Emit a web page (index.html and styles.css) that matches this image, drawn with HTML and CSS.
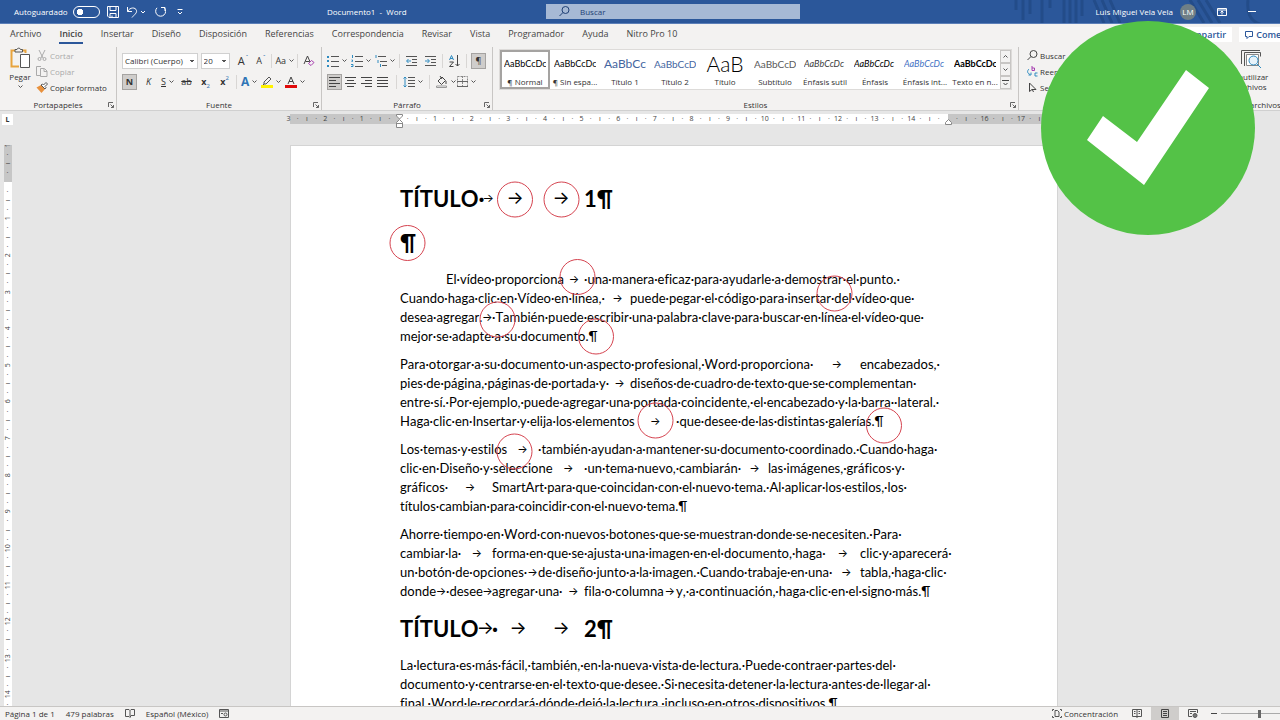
FILE: index.html
```html
<!DOCTYPE html>
<html lang="es">
<head>
    <meta charset="UTF-8">
    <meta name="viewport" content="width=device-width, initial-scale=1.0">
    <title>Documento1 - Word</title>
    <link rel="stylesheet" href="styles.css">
</head>
<body>
    <div class="app">
        <header class="titlebar">
            <svg class="waves" width="270" height="23" viewBox="0 0 270 23" fill="none" stroke="#234c89" stroke-width="3">
                <path d="M6 0v10M13 0v20M20 0v14M32 0v23M40 0v8M54 0v23M60 0v23M66 0v23M72 0v16M84 0l10 23M92 0l10 23M100 0l10 23M180 0l14 23M188 0l14 23M196 0l14 23M238 0q-2 20 12 24"/>
            </svg>
            <div class="quick">
                <label class="autosave">Autoguardado <input type="checkbox" class="toggle"></label>
                <button class="icon-btn" aria-label="Guardar">
                    <svg width="12" height="12" viewBox="0 0 12 12" fill="none" stroke="#fff"><path d="M.5.5h11v11H2L.5 10zM3 .5v4h6v-4M3 11.500V7.500h6v4M5 9.500v2"/></svg>
                </button>
                <button class="icon-btn" aria-label="Deshacer">
                    <svg width="20" height="12" viewBox="0 0 20 12" fill="none" stroke="#fff"><path d="M1.500 1v4.500H6M1.500 5.500C4 1 9.500 1 10.500 4.500c.6 2.500-2 4-4.500 7M15 5l2 2 2-2"/></svg>
                </button>
                <button class="icon-btn" aria-label="Rehacer">
                    <svg width="13" height="12" viewBox="0 0 13 12" fill="none" stroke="#fff"><path d="M8 1.500h4V5M11.500 2A5 5 0 1 1 4 1.800"/></svg>
                </button>
                <button class="icon-btn customize" aria-label="Personalizar">
                    <svg width="6" height="6" viewBox="0 0 6 6" fill="none" stroke="#fff"><path d="M.5.500h5M1 3l2 2 2-2"/></svg>
                </button>
            </div>
            <span class="doc-name">Documento1 &nbsp;- &nbsp;Word</span>
            <label class="search">
                <svg width="11" height="11" viewBox="0 0 11 11" fill="none" stroke="#1f3f74"><circle cx="6.500" cy="4" r="3.500"/><path d="M4 6.500.5 10"/></svg>
                <input type="text" placeholder="Buscar" aria-label="Buscar">
            </label>
            <div class="account">
                <span>Luis Miguel Vela Vela</span>
                <span class="avatar">LM</span>
                <button class="icon-btn" aria-label="Opciones de la cinta">
                    <svg width="10" height="8" viewBox="0 0 10 8" fill="none" stroke="#fff"><path d="M.5.500h9v7h-9zM.5 2h9M5 6.500V3M3.500 4.500 5 3l1.500 1.500"/></svg>
                </button>
                <button class="icon-btn" aria-label="Minimizar">
                    <svg width="8" height="8" viewBox="0 0 8 8" stroke="#fff"><path d="M0 3.500h8"/></svg>
                </button>
            </div>
        </header>

        <nav class="tabs">
            <a href="#">Archivo</a>
            <a href="#" class="active">Inicio</a>
            <a href="#">Insertar</a>
            <a href="#">Diseño</a>
            <a href="#">Disposición</a>
            <a href="#">Referencias</a>
            <a href="#">Correspondencia</a>
            <a href="#">Revisar</a>
            <a href="#">Vista</a>
            <a href="#">Programador</a>
            <a href="#">Ayuda</a>
            <a href="#">Nitro Pro 10</a>
            <div class="share">
                <button>Compartir</button>
                <button><svg width="8" height="8" viewBox="0 0 8 8" fill="none" stroke="#2b579a"><path d="M.5.500h7v5H4l-2 2v-2H.5z"/></svg> Comentarios</button>
            </div>
        </nav>

        <div class="ribbon">
            <section class="group clipboard">
                <div class="group-body">
                    <button class="big-btn">
                        <svg width="22" height="22" viewBox="0 0 22 22" fill="none"><path d="M10 19.500H2.500v-16h14V6" stroke="#e8a33d" stroke-width="2"/><path d="M6 5V2.500h2a1.800 1.800 0 0 1 3.500 0h2V5z" fill="#f3f2f1" stroke="#555"/><path d="M11.500 7.500h9v13h-9z" fill="#fff" stroke="#555"/></svg>
                        <span>Pegar</span>
                        <svg class="chev" viewBox="0 0 5 3"><path d="m.5.500 2 2 2-2"/></svg>
                    </button>
                    <div class="stack">
                        <button class="row-btn off"><svg width="12" height="11" viewBox="0 0 12 11" fill="none" stroke="#aaa"><path d="m3 0 4 8M9 0 5 8"/><circle cx="3.500" cy="9" r="1.500"/><circle cx="8.500" cy="9" r="1.500"/></svg>Cortar</button>
                        <button class="row-btn off"><svg width="12" height="11" viewBox="0 0 12 11" fill="none" stroke="#aaa"><path d="M4 9.500H.5v-9H5M4.500 2.500h4l2.500 2.500v5.500H4.500zM8 3v2.500h3"/></svg>Copiar</button>
                        <button class="row-btn"><svg width="12" height="11" viewBox="0 0 12 11"><path d="M.5 5.500 5 3l4 4-3.500 4z" fill="#e8913d"/><path d="m5 3 1.500-1 1 1L10 .500l1.500 1.500L9 4.500l1 1L9 7z" fill="#fff" stroke="#555"/></svg>Copiar formato</button>
                    </div>
                </div>
                <footer>Portapapeles</footer>
                <svg class="launcher" viewBox="0 0 6 6"><path d="M.5 5V.500H5M2.500 2.500l3 3M5.500 3v2.500H3"/></svg>
            </section>

            <section class="group font">
                <div class="group-body lines">
                    <div class="line">
                        <select class="font-name" aria-label="Fuente"><option>Calibri (Cuerpo)</option></select>
                        <select class="font-size" aria-label="Tamaño"><option>20</option></select>
                        <button class="tool letter">A<sup>ˆ</sup></button>
                        <button class="tool letter small">A<sup>ˇ</sup></button>
                        <i class="sep"></i>
                        <button class="tool">Aa<svg class="chev" viewBox="0 0 5 3"><path d="m.5.500 2 2 2-2"/></svg></button>
                        <i class="sep"></i>
                        <button class="tool" aria-label="Borrar formato"><svg width="12" height="12" viewBox="0 0 12 12" fill="none"><path d="m1 9 3.500-8L8 9M2.500 6.500h4" stroke="#444"/><path d="m5.500 8.500 3-3 2.500 2-3 3z" fill="#f3f2f1" stroke="#a63fb0"/></svg></button>
                    </div>
                    <div class="line format">
                        <button class="tool on"><b>N</b></button>
                        <button class="tool"><em>K</em></button>
                        <button class="tool"><u>S</u><svg class="chev" viewBox="0 0 5 3"><path d="m.5.500 2 2 2-2"/></svg></button>
                        <button class="tool"><s>ab</s></button>
                        <button class="tool script"><b>x</b><sub>2</sub></button>
                        <button class="tool script"><b>x</b><sup>2</sup></button>
                        <i class="sep"></i>
                        <button class="tool effect"><b>A</b><svg class="chev" viewBox="0 0 5 3"><path d="m.5.500 2 2 2-2"/></svg></button>
                        <button class="tool" aria-label="Resaltar"><svg width="12" height="12" viewBox="0 0 12 12" fill="none"><path d="M3 8V6l5-5 2 2-5 5zM3 8l-1 1" stroke="#555"/><path d="M0 10.500h12" stroke="#fff200" stroke-width="3"/></svg><svg class="chev" viewBox="0 0 5 3"><path d="m.5.500 2 2 2-2"/></svg></button>
                        <button class="tool" aria-label="Color de fuente"><svg width="12" height="12" viewBox="0 0 12 12" fill="none"><path d="m3 8 3-7 3 7M4 5.500h4" stroke="#444"/><path d="M0 10.500h12" stroke="#e00b0b" stroke-width="3"/></svg><svg class="chev" viewBox="0 0 5 3"><path d="m.5.500 2 2 2-2"/></svg></button>
                    </div>
                </div>
                <footer>Fuente</footer>
                <svg class="launcher" viewBox="0 0 6 6"><path d="M.5 5V.500H5M2.500 2.500l3 3M5.500 3v2.500H3"/></svg>
            </section>

            <section class="group paragraph">
                <div class="group-body lines">
                    <div class="line lists">
                        <button class="tool" aria-label="Viñetas"><svg width="12" height="12" viewBox="0 0 12 12"><path d="M4 1.500h8M4 6.500h8M4 11.500h8" stroke="#555"/><path d="M0 1h2v2H0zM0 5h2v2H0zM0 10h2v2H0z" fill="#2e8bc0"/></svg><svg class="chev" viewBox="0 0 5 3"><path d="m.5.500 2 2 2-2"/></svg></button>
                        <button class="tool" aria-label="Numeración"><svg width="12" height="12" viewBox="0 0 12 12" fill="none"><path d="M4 1.500h8M4 6.500h8M4 11.500h8" stroke="#555"/><path d="M1.500 0v3M.5 5h1v1.500h-1M0 9.500h2v2H0" stroke="#2e8bc0"/></svg><svg class="chev" viewBox="0 0 5 3"><path d="m.5.500 2 2 2-2"/></svg></button>
                        <button class="tool" aria-label="Lista multinivel"><svg width="12" height="12" viewBox="0 0 12 12" fill="none"><path d="M3 1.500h8M5 6.500h7M7 10.500h5" stroke="#555"/><path d="M1 0v3M3 5v3M5.500 9v3" stroke="#2e8bc0"/></svg><svg class="chev" viewBox="0 0 5 3"><path d="m.5.500 2 2 2-2"/></svg></button>
                        <i class="sep"></i>
                        <button class="tool" aria-label="Disminuir sangría"><svg width="11" height="12" viewBox="0 0 11 12" fill="none"><path d="M0 1.500h11M6 4.500h5M6 7.500h5M0 10.500h11" stroke="#555"/><path d="M5 6H1M2.500 4 .5 6l2 2" stroke="#2e8bc0"/></svg></button>
                        <button class="tool" aria-label="Aumentar sangría"><svg width="11" height="12" viewBox="0 0 11 12" fill="none"><path d="M0 1.500h11M6 4.500h5M6 7.500h5M0 10.500h11" stroke="#555"/><path d="M0 6h4M2.500 4l2 2-2 2" stroke="#2e8bc0"/></svg></button>
                        <i class="sep"></i>
                        <button class="tool" aria-label="Ordenar"><svg width="11" height="12" viewBox="0 0 11 12" fill="none"><path d="m.5 5 2-4.500 2 4.500M1 3.500h3" stroke="#2e8bc0"/><path d="M.5 7h4l-4 4.500h4M8.500 0v11M6.500 9l2 2 2-2" stroke="#444"/></svg></button>
                        <i class="sep"></i>
                        <button class="tool on">¶</button>
                    </div>
                    <div class="line align">
                        <button class="tool on" aria-label="Alinear a la izquierda"><svg width="11" height="10" viewBox="0 0 11 10" stroke="#444"><path d="M0 .500h11M0 3.500h7M0 6.500h11M0 9.500h7"/></svg></button>
                        <button class="tool" aria-label="Centrar"><svg width="11" height="10" viewBox="0 0 11 10" stroke="#444"><path d="M0 .500h11M2 3.500h7M0 6.500h11M2 9.500h7"/></svg></button>
                        <button class="tool" aria-label="Alinear a la derecha"><svg width="11" height="10" viewBox="0 0 11 10" stroke="#444"><path d="M0 .500h11M4 3.500h7M0 6.500h11M4 9.500h7"/></svg></button>
                        <button class="tool" aria-label="Justificar"><svg width="11" height="10" viewBox="0 0 11 10" stroke="#444"><path d="M0 .500h11M0 3.500h11M0 6.500h11M0 9.500h11"/></svg></button>
                        <i class="sep"></i>
                        <button class="tool" aria-label="Interlineado"><svg width="12" height="12" viewBox="0 0 12 12" fill="none"><path d="M5 1.500h7M5 4.500h7M5 7.500h7M5 10.500h7" stroke="#555"/><path d="M2 1v10M.5 2.500 2 1l1.500 1.500M.5 9.500 2 11l1.500-1.500" stroke="#2e8bc0"/></svg><svg class="chev" viewBox="0 0 5 3"><path d="m.5.500 2 2 2-2"/></svg></button>
                        <i class="sep"></i>
                        <button class="tool" aria-label="Sombreado"><svg width="12" height="12" viewBox="0 0 12 12" fill="none"><path d="m2 5 4-4 3.500 3.500-4 4zM4 0l2 3M10 5v3" stroke="#444"/><path d="M.5 10h10v1.500H.500z" fill="#fff" stroke="#999"/></svg><svg class="chev" viewBox="0 0 5 3"><path d="m.5.500 2 2 2-2"/></svg></button>
                        <button class="tool" aria-label="Bordes"><svg width="11" height="11" viewBox="0 0 11 11" fill="none"><path d="M.5.500h10v10H.500zM5.500 0v11" stroke="#888" stroke-dasharray="2 1"/><path d="M0 5.500h11M0 10.500h11" stroke="#666"/></svg><svg class="chev" viewBox="0 0 5 3"><path d="m.5.500 2 2 2-2"/></svg></button>
                    </div>
                </div>
                <footer>Párrafo</footer>
                <svg class="launcher" viewBox="0 0 6 6"><path d="M.5 5V.500H5M2.500 2.500l3 3M5.500 3v2.500H3"/></svg>
            </section>

            <section class="group styles">
                <div class="gallery">
                    <button class="style selected"><span>AaBbCcDc</span>¶ Normal</button>
                    <button class="style"><span>AaBbCcDc</span>¶ Sin espa...</button>
                    <button class="style heading1"><span>AaBbCc</span>Título 1</button>
                    <button class="style heading2"><span>AaBbCcD</span>Título 2</button>
                    <button class="style title"><span>AaB</span>Título</button>
                    <button class="style subtitle"><span>AaBbCcD</span>Subtítulo</button>
                    <button class="style subtle"><span>AaBbCcDc</span>Énfasis sutil</button>
                    <button class="style emphasis"><span>AaBbCcDc</span>Énfasis</button>
                    <button class="style intense"><span>AaBbCcDc</span>Énfasis int...</button>
                    <button class="style strong"><span>AaBbCcDc</span>Texto en n...</button>
                    <div class="scroller">
                        <button aria-label="Arriba" disabled><svg class="chev" viewBox="0 0 5 3"><path d="m.5 2.500 2-2 2 2"/></svg></button>
                        <button aria-label="Abajo"><svg class="chev" viewBox="0 0 5 3"><path d="m.5.500 2 2 2-2"/></svg></button>
                        <button aria-label="Más"><svg width="7" height="6" viewBox="0 0 7 6" fill="none" stroke="#444"><path d="M0 .500h7M1.500 3l2 2 2-2"/></svg></button>
                    </div>
                </div>
                <footer>Estilos</footer>
                <svg class="launcher" viewBox="0 0 6 6"><path d="M.5 5V.500H5M2.500 2.500l3 3M5.500 3v2.500H3"/></svg>
            </section>

            <section class="group editing">
                <div class="stack">
                    <button class="row-btn"><svg width="11" height="11" viewBox="0 0 11 11" fill="none" stroke="#444"><circle cx="6.500" cy="4" r="3.500"/><path d="M4 6.500.5 10"/></svg>Buscar</button>
                    <button class="row-btn"><svg width="11" height="11" viewBox="0 0 11 11" fill="none"><path d="M5 0v4.500h2.500V2H5" stroke="#a63fb0"/><path d="M2 3C0 5 0 7 3 8.500M1.500 9H4V6.500M10.500 7H8v3h2.500" stroke="#2e8bc0"/></svg>Reemplazar</button>
                    <button class="row-btn"><svg width="11" height="11" viewBox="0 0 11 11" fill="none" stroke="#444"><path d="M2.500 1v8.500L5 7.500h4zM5 7l1.500 3"/></svg>Seleccionar</button>
                </div>
            </section>

            <section class="group reuse">
                <button class="big-btn">
                    <svg width="22" height="20" viewBox="0 0 22 20" fill="none"><path d="M1.500 15V1.500H20M4.500 17V3.500h16v4" stroke="#555"/><path d="M6.500 5.500h12v11h-12z" fill="#fff" stroke="#888"/><circle cx="13.500" cy="11.500" r="4.500" fill="#e8f3fa" stroke="#2e8bc0"/><path d="m17 15 4 4" stroke="#2e8bc0"/></svg>
                    <span>Reutilizar<br>archivos</span>
                </button>
                <footer>Reutilizar archivos</footer>
            </section>
        </div>

        <main class="workspace">
            <div class="tab-picker">L</div>
            <div class="ruler">
                <div class="ticks" id="rulerTop"></div>
                <svg class="indent" width="7" height="14" viewBox="0 0 7 14"><path d="M.5.500h6V2l-3 3-3-3zM3.500 5.500l3 3v5h-6v-5zM.5 9.500h6" fill="#fff" stroke="#888"/></svg>
                <svg class="indent right" width="7" height="6" viewBox="0 0 7 6"><path d="M3.500.500l3 3v2h-6v-2z" fill="#fff" stroke="#888"/></svg>
            </div>
            <div class="side-ruler">
                <div class="ticks" id="rulerSide"></div>
            </div>
            <article class="page">
                <h1>TÍTULO·<span class="tab tight"><i>→</i>	</span><span class="tab"><i>→</i>	</span><span class="tab"><i>→</i>	</span>1¶</h1>
                <h1>¶</h1>
<p><span class="tab">	</span>El·vídeo·proporciona<span class="tab"><i>→</i>	</span>·una·manera·eficaz·para·ayudarle·a·demostrar·el·punto.·
Cuando·haga·clic·en·Vídeo·en·línea,·<span class="tab"><i>→</i>	</span>puede·pegar·el·código·para·insertar·del·vídeo·que·
desea·agregar.<span class="tab"><i>→</i>	</span>·También·puede·escribir·una·palabra·clave·para·buscar·en·línea·el·vídeo·que·
mejor·se·adapte·a·su·documento.¶</p>
<p>Para·otorgar·a·su·documento·un·aspecto·profesional,·Word·proporciona·<span class="tab wide"><i>→</i>	</span>encabezados,·
pies·de·página,·páginas·de·portada·y·<span class="tab"><i>→</i>	</span>diseños·de·cuadro·de·texto·que·se·complementan·
entre·sí.·Por·ejemplo,·puede·agregar·una·portada·coincidente,·el·encabezado·y·la·barra··lateral.·
Haga·clic·en·Insertar·y·elija·los·elementos<span class="tab"><i>→</i>	</span>·que·desee·de·las·distintas·galerías.¶</p>
<p>Los·temas·y·estilos<span class="tab"><i>→</i>	</span>·también·ayudan·a·mantener·su·documento·coordinado.·Cuando·haga·
clic·en·Diseño·y·seleccione<span class="tab"><i>→</i>	</span>·un·tema·nuevo,·cambiarán·<span class="tab"><i>→</i>	</span>las·imágenes,·gráficos·y·
gráficos·<span class="tab"><i>→</i>	</span>SmartArt·para·que·coincidan·con·el·nuevo·tema.·Al·aplicar·los·estilos,·los·
títulos·cambian·para·coincidir·con·el·nuevo·tema.¶</p>
<p>Ahorre·tiempo·en·Word·con·nuevos·botones·que·se·muestran·donde·se·necesiten.·Para·
cambiar·la·<span class="tab"><i>→</i>	</span>forma·en·que·se·ajusta·una·imagen·en·el·documento,·haga·<span class="tab"><i>→</i>	</span>clic·y·aparecerá·
un·botón·de·opciones·<span class="tab"><i>→</i>	</span>de·diseño·junto·a·la·imagen.·Cuando·trabaje·en·una·<span class="tab"><i>→</i>	</span>tabla,·haga·clic·
donde<span class="tab"><i>→</i>	</span>·desee<span class="tab"><i>→</i>	</span>agregar·una·<span class="tab"><i>→</i>	</span>fila·o·columna<span class="tab"><i>→</i>	</span>y,·a·continuación,·haga·clic·en·el·signo·más.¶</p>
                <h1>TÍTULO<span class="tab"><i>→</i>	</span>·<span class="tab"><i>→</i>	</span><span class="tab"><i>→</i>	</span>2¶</h1>
<p>La·lectura·es·más·fácil,·también,·en·la·nueva·vista·de·lectura.·Puede·contraer·partes·del·
documento·y·centrarse·en·el·texto·que·desee.·Si·necesita·detener·la·lectura·antes·de·llegar·al·
final.·Word·le·recordará·dónde·dejó·la·lectura,·incluso·en·otros·dispositivos.¶</p>
                <svg class="marks" width="766" height="560" viewBox="0 0 766 560" fill="none" stroke="#d5434f">
                    <circle cx="224" cy="53.500" r="17.500"/>
                    <circle cx="270.500" cy="53.500" r="17.500"/>
                    <circle cx="116.500" cy="97" r="17.500"/>
                    <circle cx="286.500" cy="131" r="17.500"/>
                    <circle cx="543.500" cy="147.500" r="17.500"/>
                    <circle cx="206.500" cy="173.500" r="17.500"/>
                    <circle cx="305" cy="190.500" r="17.500"/>
                    <circle cx="364.500" cy="274.500" r="17.500"/>
                    <circle cx="593" cy="279.500" r="17.500"/>
                    <circle cx="223.500" cy="305.500" r="17.500"/>
                </svg>
            </article>
        </main>

        <footer class="statusbar">
            <span>Página 1 de 1</span>
            <span>479 palabras</span>
            <svg width="10" height="9" viewBox="0 0 10 9" fill="none" stroke="#555"><path d="M.5.500H4l1 1 1-1h3.500v6H6L5 8.500l-1-1H.500zM5 1.500v6"/></svg>
            <span>Español (México)</span>
            <svg width="10" height="9" viewBox="0 0 10 9" fill="none" stroke="#555"><path d="M.5.500h9v8h-9zM0 2h10M2 4.500h2"/><circle cx="6.500" cy="5.500" r="1.500"/></svg>
            <div class="views">
                <button class="focus"><svg width="10" height="9" viewBox="0 0 10 9" fill="none" stroke="#555"><path d="M2 .500H.500V2M8 .500h1.500V2M2 8.500H.500V7M8 8.500h1.500V7M3 1.500h2.500L7 3v4.500H3z"/></svg> Concentración</button>
                <button aria-label="Modo de lectura"><svg width="10" height="9" viewBox="0 0 10 9" fill="none" stroke="#555"><path d="M.5.500h9v7h-9zM5 0v9M2 2.500h1.500M2 4.500h1.500M6.500 2.500H8M6.500 4.500H8"/></svg></button>
                <button class="on" aria-label="Diseño de impresión"><svg width="8" height="9" viewBox="0 0 8 9" fill="none" stroke="#444"><path d="M.5.500h7v8h-7zM2 2.500h4M2 4.500h4M2 6.500h4"/></svg></button>
                <button aria-label="Diseño web"><svg width="10" height="9" viewBox="0 0 10 9" fill="none" stroke="#555"><path d="M4 7.500H.500v-7h9V4M2 2.500h6M2 4.500h2"/><circle cx="7" cy="6.500" r="2" fill="#777"/></svg></button>
                <button class="minus" aria-label="Alejar"><svg width="6" height="5" viewBox="0 0 6 5" stroke="#444"><path d="M0 2.500h6"/></svg></button>
                <input type="range" class="zoom" aria-label="Zoom" min="0" max="200" value="100">
            </div>
        </footer>

        <svg class="badge" width="214" height="214" viewBox="0 0 214 214" role="img" aria-label="Correcto">
            <circle cx="107" cy="107" r="107" fill="#54c247"/>
            <path d="m145 49 23 18-65 97-57-45 16-24 34 26z" fill="#fff"/>
        </svg>
    </div>

    <script>
        // Four ticks per centimetre: number, dot, bar, dot
        function fillRuler(id, count, label) {
            const ruler = document.getElementById(id);
            for (let i = 0; i < count; i++) {
                const tick = document.createElement('span');
                tick.textContent = i % 4 === 0 ? label(i / 4) : (i % 4 === 2 ? 'ı' : '·');
                ruler.appendChild(tick);
            }
        }
        // No number at zero or under the right indent marker
        fillRuler('rulerTop', 84, n => n === 3 || n === 18 ? '' : Math.abs(n - 3));
        fillRuler('rulerSide', 62, n => n === 1 ? '' : Math.abs(n - 1));
    </script>
</body>
</html>
```
FILE: styles.css
```css
* {
    box-sizing: border-box;
}
body {
    margin: 0;
    font-family: "Open Sans", "Noto Sans", sans-serif;
    font-size: 8px;
    color: #333;
    background-color: #e6e6e6;
    overflow: hidden;
}
.app {
    position: relative;
    display: flex;
    flex-direction: column;
    height: 100vh;
    overflow: hidden;
}
button, input, select {
    font: inherit;
    color: inherit;
}
button {
    display: flex;
    align-items: center;
    padding: 0;
    border: none;
    background: none;
    white-space: nowrap;
}
svg {
    flex-shrink: 0;
}
a {
    color: inherit;
    text-decoration: none;
}

/* Title bar */
.titlebar {
    position: relative;
    display: flex;
    align-items: center;
    height: 24px;
    flex-shrink: 0;
    background-color: #2b579a;
    border-bottom: 1px solid #5b7fb8;
    color: white;
}
.waves {
    position: absolute;
    right: 0;
    top: 0;
}
.quick {
    display: flex;
    align-items: center;
    gap: 7px;
    width: 327px;
    padding-left: 14px;
}
.autosave {
    display: flex;
    align-items: center;
    gap: 5px;
}
.toggle {
    appearance: none;
    width: 27px;
    height: 12px;
    margin: 0;
    border: 1px solid white;
    border-radius: 6px;
    background: radial-gradient(circle at 6px 5px, white 3px, transparent 3px);
}
.customize {
    margin-left: 4px;
}
.doc-name {
    width: 219px;
}
.search {
    display: flex;
    align-items: center;
    gap: 10px;
    width: 254px;
    height: 15px;
    padding-left: 13px;
    background-color: #a6b9d5;
    color: #1f3f74;
}
.search input {
    border: none;
    background: none;
    padding: 0;
    width: 200px;
}
.search input::placeholder {
    color: #1f3f74;
}
.account {
    position: relative;
    display: flex;
    align-items: center;
    gap: 7px;
    margin-left: auto;
    padding-right: 24px;
}
.account .icon-btn {
    margin-left: 14px;
}
.avatar {
    width: 16px;
    height: 16px;
    line-height: 16px;
    border-radius: 50%;
    text-align: center;
    background-color: #6f7f86;
}

/* Tabs */
.tabs {
    display: flex;
    align-items: center;
    gap: 18px;
    height: 21px;
    flex-shrink: 0;
    padding-left: 10px;
    background-color: #f3f2f1;
    font-size: 9px;
    color: #444;
    white-space: nowrap;
}
.tabs a {
    line-height: 17px;
    border-bottom: 2px solid transparent;
}
.tabs .active {
    font-weight: 600;
    border-color: #2b579a;
}
.share {
    display: flex;
    gap: 7px;
    margin-left: auto;
    margin-right: -38px;
    color: #2b579a;
    font-weight: 600;
}
.share button {
    gap: 3px;
    height: 15px;
    padding: 0 6px;
    background-color: white;
}

/* Ribbon */
.ribbon {
    display: flex;
    height: 66px;
    flex-shrink: 0;
    background-color: #f3f2f1;
    border-bottom: 1px solid #d0d0d0;
}
.group {
    position: relative;
    display: flex;
    flex-direction: column;
    justify-content: space-between;
    flex-shrink: 0;
    margin-top: 2px;
    padding-top: 2px;
    border-right: 1px solid #c8c6c4;
}
.group footer {
    text-align: center;
    line-height: 10px;
}
.launcher {
    position: absolute;
    right: 2px;
    bottom: 2px;
    width: 6px;
    height: 6px;
    fill: none;
    stroke: #666;
}
.chev {
    width: 5px;
    height: 3px;
    fill: none;
    stroke: #555;
}
.group-body {
    display: flex;
}
.clipboard {
    width: 117px;
    padding-top: 0;
}
.font {
    width: 205px;
}
.paragraph {
    width: 171px;
}
.styles {
    width: 526px;
}
.editing {
    width: 110px;
    padding: 0 0 0 8px;
    justify-content: flex-start;
}
.reuse {
    width: 220px;
    padding-left: 102px;
    border: none;
}
.reuse footer {
    margin-left: -18px;
    text-align: left;
}
.big-btn {
    flex-direction: column;
    width: 40px;
    gap: 3px;
    line-height: 10px;
}
.stack {
    display: flex;
    flex-direction: column;
}
.clipboard .stack {
    margin-left: -4px;
}
.row-btn {
    gap: 2px;
    height: 16px;
}
.off {
    color: #aaa;
}
.lines {
    flex-direction: column;
    gap: 4px;
    padding: 3px 5px 0;
}
.line {
    display: flex;
    align-items: center;
    gap: 3px;
    height: 17px;
}
.format, .lists {
    gap: 4px;
}
.align {
    gap: 1px;
}
.align .sep {
    margin: 0 5px;
}
.tool {
    justify-content: center;
    gap: 3px;
    min-width: 15px;
    height: 16px;
    font-size: 9px;
}
.script {
    gap: 0;
}
.tool sup, .tool sub {
    font-size: 6px;
    line-height: 8px;
    color: #2e6fae;
}
.tool sup {
    align-self: flex-start;
}
.tool sub {
    align-self: flex-end;
}
.letter {
    gap: 1px;
    font-size: 11px;
}
.small {
    font-size: 9px;
}
.on {
    background-color: #cfcdcb;
    outline: 1px solid #a5a3a1;
    outline-offset: -1px;
}
.effect {
    color: #2e75b6;
    font-size: 12px;
}
.sep {
    width: 1px;
    height: 14px;
    background-color: #d8d6d4;
}
.font-name, .font-size {
    appearance: none;
    height: 16px;
    padding: 0 2px;
    border: 1px solid #d0d0d0;
    border-radius: 0;
    background-color: white;
    background-image: linear-gradient(45deg, transparent 50%, #555 50%), linear-gradient(-45deg, transparent 50%, #555 50%);
    background-repeat: no-repeat;
    background-size: 2px 2px;
    background-position: right 5px center, right 3px center;
}
.font-name {
    width: 76px;
}
.font-size {
    width: 30px;
    margin-right: 2px;
}

/* Styles gallery */
.gallery {
    display: flex;
    height: 41px;
    margin: 0 6px;
    background-color: white;
    border: 1px solid #dddbd9;
}
.style {
    flex: 1 1 0;
    flex-direction: column;
    justify-content: space-between;
    min-width: 0;
    padding: 3px 4px 2px;
    overflow: hidden;
}
.style span {
    width: 100%;
    height: 22px;
    overflow: hidden;
    font-family: Lato, sans-serif;
    font-size: 9px;
    line-height: 22px;
    text-align: left;
    color: black;
}
.style.selected {
    border: 2px solid #a5a3a1;
    padding: 1px 2px 0;
}
.style.heading1 span {
    font-size: 12px;
    color: #44659f;
}
.style.heading2 span {
    font-size: 10px;
    color: #44659f;
}
.style.title span {
    font-size: 21px;
    font-weight: 300;
    text-align: center;
}
.style.subtitle span {
    font-size: 10px;
    color: #5a5a5a;
}
.style.subtle span {
    font-style: italic;
    color: #404040;
}
.style.emphasis span {
    font-style: italic;
}
.style.intense span {
    font-style: italic;
    color: #4472c4;
}
.style.strong span {
    font-weight: bold;
}
.scroller {
    display: flex;
    flex-direction: column;
    width: 11px;
}
.scroller button {
    flex: 1;
    justify-content: center;
    border: 1px solid #c8c6c4;
    background-color: #f3f2f1;
}

/* Workspace */
.workspace {
    position: relative;
    display: grid;
    grid-template-columns: 18px 1fr;
    grid-template-rows: 34px 1fr;
    flex: 1;
    min-height: 0;
    overflow: hidden;
}
.tab-picker {
    width: 11px;
    height: 11px;
    margin: 3px 2px;
    background-color: white;
    font-size: 7px;
    font-weight: bold;
    line-height: 11px;
    text-align: center;
}
.ruler {
    position: relative;
    width: 766px;
    height: 10px;
    margin: 3px 0 0 272px;
    background: linear-gradient(90deg, #c6c6c6 109px, white 109px, white 658px, #c6c6c6 658px);
}
.ticks {
    display: flex;
    font-size: 7px;
    line-height: 10px;
    color: #444;
}
.ticks span {
    flex: 1 1 0;
    min-width: 0;
    min-height: 0;
    display: flex;
    justify-content: center;
    align-items: center;
}
.ruler .ticks {
    width: 769px;
    margin-left: -6px;
}
.indent {
    position: absolute;
    left: 106px;
    top: 0;
}
.indent.right {
    left: 655px;
    top: 5px;
}
.side-ruler {
    margin-left: 4px;
    width: 8px;
    overflow: hidden;
    background: linear-gradient(#c6c6c6 37px, white 37px);
}
.side-ruler .ticks {
    flex-direction: column;
    height: 568px;
    margin-top: -4px;
    line-height: 8px;
}
.side-ruler .ticks span {
    writing-mode: vertical-rl;
    transform: rotate(180deg);
}
.page {
    position: relative;
    width: 766px;
    margin: 1px 0 0 273px;
    padding: 25px 100px 0 109px;
    background-color: white;
    box-shadow: 0 0 0 1px #d4d4d4;
    font-family: Lato, sans-serif;
    font-size: 13px;
    font-kerning: none;
    font-variant-ligatures: none;
    color: black;
    overflow: hidden;
}
.page h1, .page p {
    white-space: pre;
    tab-size: 46px;
}
.page h1 {
    margin: 11px 0;
    font-size: 22px;
    line-height: 33px;
}
.page p {
    margin: 0 0 9px;
    line-height: 19px;
}

/* Formatting mark centred over each tab gap */
.tab {
    position: relative;
}
.tab i {
    position: absolute;
    left: 50%;
    transform: translateX(-50%);
    font-family: Inter, "DejaVu Sans", sans-serif;
    font-style: normal;
    font-weight: 400;
    font-size: 11px;
    line-height: 18px;
}
.tab.wide {
    padding-left: 8px;
}
h1 .tab i {
    font-size: 18px;
    line-height: 31px;
}
h1 .tight i {
    font-size: 12px;
}
.marks {
    position: absolute;
    left: 0;
    top: 0;
}

/* Status bar */
.statusbar {
    display: flex;
    align-items: center;
    gap: 11px;
    height: 14px;
    flex-shrink: 0;
    padding-left: 5px;
    background-color: #f3f2f1;
    border-top: 1px solid #c8c6c4;
}
.views {
    display: flex;
    align-items: center;
    margin-left: auto;
    margin-right: -17px;
    height: 13px;
}
.views button {
    justify-content: center;
    gap: 2px;
    width: 28px;
    height: 13px;
}
.views .focus {
    width: 72px;
    margin-right: 2px;
}
.views .minus {
    width: 14px;
}
.views .on {
    outline: none;
}
.zoom {
    appearance: none;
    width: 76px;
    height: 9px;
    margin: 0;
    background: linear-gradient(#aaa, #aaa) no-repeat center / 100% 1px;
}
.zoom::-webkit-slider-thumb {
    appearance: none;
    width: 3px;
    height: 8px;
    background-color: #666;
}

/* Check badge over the window */
.badge {
    position: absolute;
    top: 21px;
    right: 25px;
}
```
